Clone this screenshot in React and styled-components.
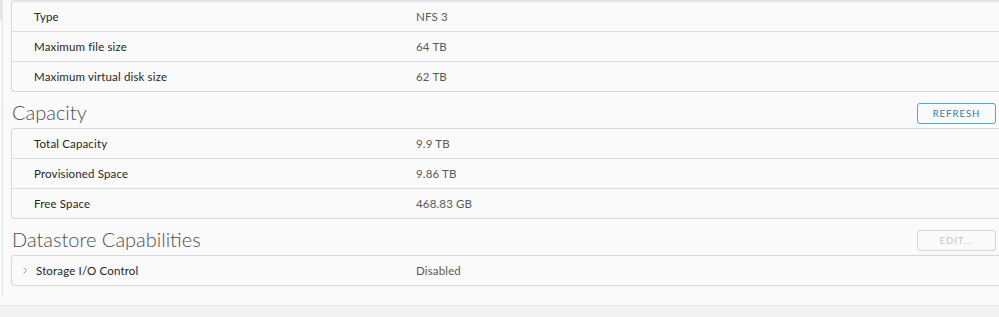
import React from "react";
import styled, { createGlobalStyle } from "styled-components";

const GlobalStyle = createGlobalStyle`
  html, body {
    margin: 0;
    background: #fafafa;
    overflow: hidden;
  }
  body {
    font-family: Lato, "Open Sans", sans-serif;
    color: #333;
  }
`;

const Page = styled.div`
  position: relative;
  width: 999px;
  height: 317px;
  overflow: hidden;
  background: #fafafa;
`;

const ScrollThumb = styled.div`
  position: absolute;
  left: 0;
  top: 0;
  width: 3px;
  height: 20px;
  background: #e6e6e6;
`;

const Frame = styled.div`
  margin-left: 2px;
  border-left: 1px solid #e2e2e2;
  height: 297px;
  padding-left: 8px;
`;

const Content = styled.div`
  width: 992px;
`;

const Table = styled.div`
  border: 1px solid #d7d7d7;
  border-top: ${(p) => (p.$thickTop ? "2px solid #e4e4e4" : "1px solid #d7d7d7")};
  border-radius: 3px;
  background: #fafafa;
`;

const Row = styled.div`
  display: grid;
  grid-template-columns: 404px 1fr;
  align-items: center;
  height: 29px;
  font-size: 11.5px;
  letter-spacing: 0.15px;
  & + & {
    border-top: 1px solid #dedede;
  }
`;

const Label = styled.div`
  padding-left: ${(p) => (p.$expandable ? 10 : 22)}px;
  color: #262626;
  display: flex;
  align-items: center;
  gap: 8px;
`;

const Value = styled.div`
  color: #5a5a5a;
`;

const Chevron = () => (
  <svg width="6" height="9" viewBox="0 0 6 9">
    <path d="M1.5 1.5 L4.5 4.5 L1.5 7.5" fill="none" stroke="#9a9a9a" strokeWidth="1" />
  </svg>
);

const SectionHeader = styled.div`
  display: flex;
  justify-content: space-between;
  align-items: center;
  height: 29px;
  padding: 7px 7px 0 0;
`;

const Title = styled.h2`
  margin: 0 0 3px;
  padding-left: 1px;
  font-size: 20px;
  line-height: 22px;
  font-weight: 300;
  color: #4f4f4f;
`;

const Button = styled.button`
  width: 79px;
  height: 21px;
  border-radius: 3px;
  background: transparent;
  font-family: Lato, "Open Sans", sans-serif;
  font-size: 9.5px;
  letter-spacing: 1px;
  border: 1px solid ${(p) => (p.disabled ? "#d5d5d5" : "#4ea6dc")};
  color: ${(p) => (p.disabled ? "#c4c4c4" : "#2a7ab8")};
  padding: 0;
`;

const Footer = styled.div`
  position: absolute;
  left: 0;
  right: 0;
  bottom: 0;
  height: 11px;
  background: #f2f2f2;
  border-top: 1px solid #e6e6e6;
`;

const general = [
  ["Type", "NFS 3"],
  ["Maximum file size", "64 TB"],
  ["Maximum virtual disk size", "62 TB"],
];

const capacity = [
  ["Total Capacity", "9.9 TB"],
  ["Provisioned Space", "9.86 TB"],
  ["Free Space", "468.83 GB"],
];

export default function App() {
  return (
    <Page>
      <GlobalStyle />
      <ScrollThumb />
      <Frame>
        <Content>
          <Table $thickTop>
            {general.map(([k, v]) => (
              <Row key={k}>
                <Label>{k}</Label>
                <Value>{v}</Value>
              </Row>
            ))}
          </Table>

          <SectionHeader>
            <Title>Capacity</Title>
            <Button>REFRESH</Button>
          </SectionHeader>
          <Table>
            {capacity.map(([k, v]) => (
              <Row key={k}>
                <Label>{k}</Label>
                <Value>{v}</Value>
              </Row>
            ))}
          </Table>

          <SectionHeader>
            <Title>Datastore Capabilities</Title>
            <Button disabled>EDIT...</Button>
          </SectionHeader>
          <Table>
            <Row>
              <Label $expandable>
                <Chevron />
                Storage I/O Control
              </Label>
              <Value>Disabled</Value>
            </Row>
          </Table>
        </Content>
      </Frame>
      <Footer />
    </Page>
  );
}
